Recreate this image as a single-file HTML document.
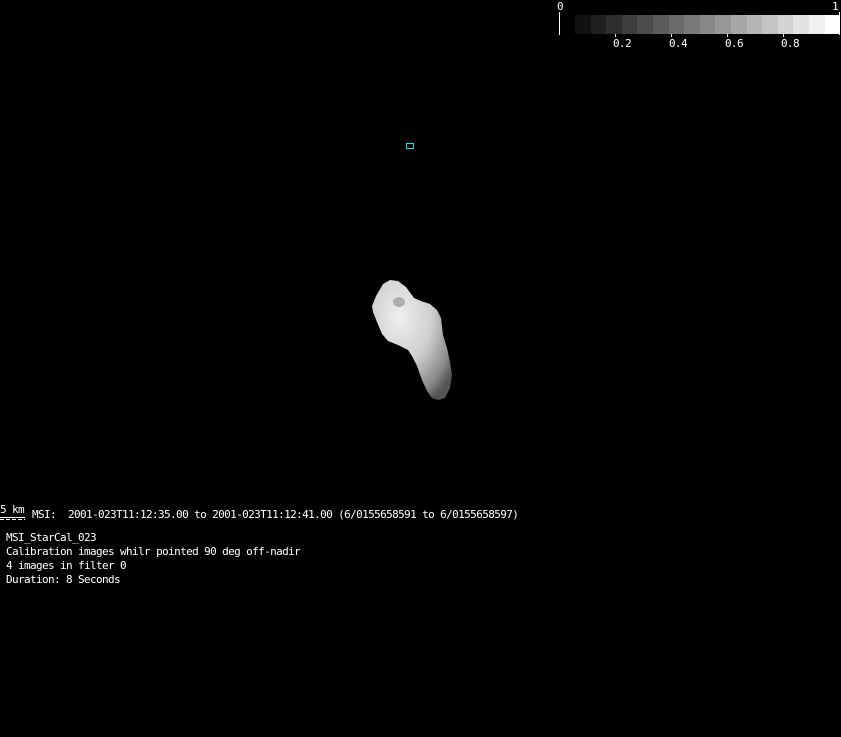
<!DOCTYPE html>
<html><head><meta charset="utf-8"><style>
html,body{margin:0;padding:0;background:#000;width:841px;height:737px;overflow:hidden}
.t{position:absolute;color:#fff;font-family:"DejaVu Sans Mono","Liberation Mono",monospace;font-size:11px;letter-spacing:-0.62px;line-height:12px;white-space:pre}
</style></head><body>
<svg width="841" height="737" style="position:absolute;left:0;top:0">
<defs>
<radialGradient id="g" cx="0.35" cy="0.3" r="0.8">
<stop offset="0" stop-color="#eeeeee"/><stop offset="0.5" stop-color="#cfcfcf"/><stop offset="0.85" stop-color="#8a8a8a"/><stop offset="1" stop-color="#555"/>
</radialGradient>
</defs>
<rect x="406.5" y="143.5" width="7" height="5" fill="none" stroke="#00e5e5" stroke-width="1"/>
<polygon fill="url(#g)" points="383,284 390,280 398,281 406,287 414,298 421,301 430,304 437,310 441,318 443,335 447,348 450,362 452,375 450,388 445,398 438,400 432,398 427,391 422,380 417,366 412,356 408,350 398,345 388,341 382,334 377,322 373,312 372,306 376,296"/>
<ellipse cx="399" cy="302" rx="6" ry="5" fill="#888" opacity="0.6"/>
<line x1="559.5" y1="12" x2="559.5" y2="35" stroke="#fff"/>
<line x1="615.5" y1="33" x2="615.5" y2="37" stroke="#fff"/>
<line x1="671.5" y1="33" x2="671.5" y2="37" stroke="#fff"/>
<line x1="727.5" y1="33" x2="727.5" y2="37" stroke="#fff"/>
<line x1="783.5" y1="33" x2="783.5" y2="37" stroke="#fff"/>
<line x1="839.5" y1="12" x2="839.5" y2="35" stroke="#fff"/>
<line x1="0" y1="517.5" x2="25" y2="517.5" stroke="#fff"/>
<line x1="0" y1="519.5" x2="25" y2="519.5" stroke="#fff" stroke-dasharray="4,2"/>
</svg>
<div style="position:absolute;left:575px;top:15px;height:19px;width:265px;display:flex">
<div style="flex:1;background:#111"></div><div style="flex:1;background:#1f1f1f"></div><div style="flex:1;background:#2e2e2e"></div><div style="flex:1;background:#3d3d3d"></div><div style="flex:1;background:#4c4c4c"></div><div style="flex:1;background:#5b5b5b"></div><div style="flex:1;background:#6a6a6a"></div><div style="flex:1;background:#797979"></div><div style="flex:1;background:#888"></div><div style="flex:1;background:#979797"></div><div style="flex:1;background:#a6a6a6"></div><div style="flex:1;background:#b5b5b5"></div><div style="flex:1;background:#c4c4c4"></div><div style="flex:1;background:#d3d3d3"></div><div style="flex:1;background:#e2e2e2"></div><div style="flex:1;background:#f0f0f0"></div><div style="flex:1;background:#fff"></div>
</div>
<div class="t" style="left:557px;top:1px">0</div>
<div class="t" style="left:832px;top:1px">1</div>
<div class="t" style="left:613px;top:38px">0.2</div>
<div class="t" style="left:669px;top:38px">0.4</div>
<div class="t" style="left:725px;top:38px">0.6</div>
<div class="t" style="left:781px;top:38px">0.8</div>
<div class="t" style="left:0px;top:504px">5 km</div>
<div class="t" style="left:32px;top:509px">MSI:  2001-023T11:12:35.00 to 2001-023T11:12:41.00 (6/0155658591 to 6/0155658597)</div>
<div class="t" style="left:6px;top:532px">MSI_StarCal_023</div>
<div class="t" style="left:6px;top:546px">Calibration images whilr pointed 90 deg off-nadir</div>
<div class="t" style="left:6px;top:560px">4 images in filter 0</div>
<div class="t" style="left:6px;top:574px">Duration: 8 Seconds</div>
</body></html>
